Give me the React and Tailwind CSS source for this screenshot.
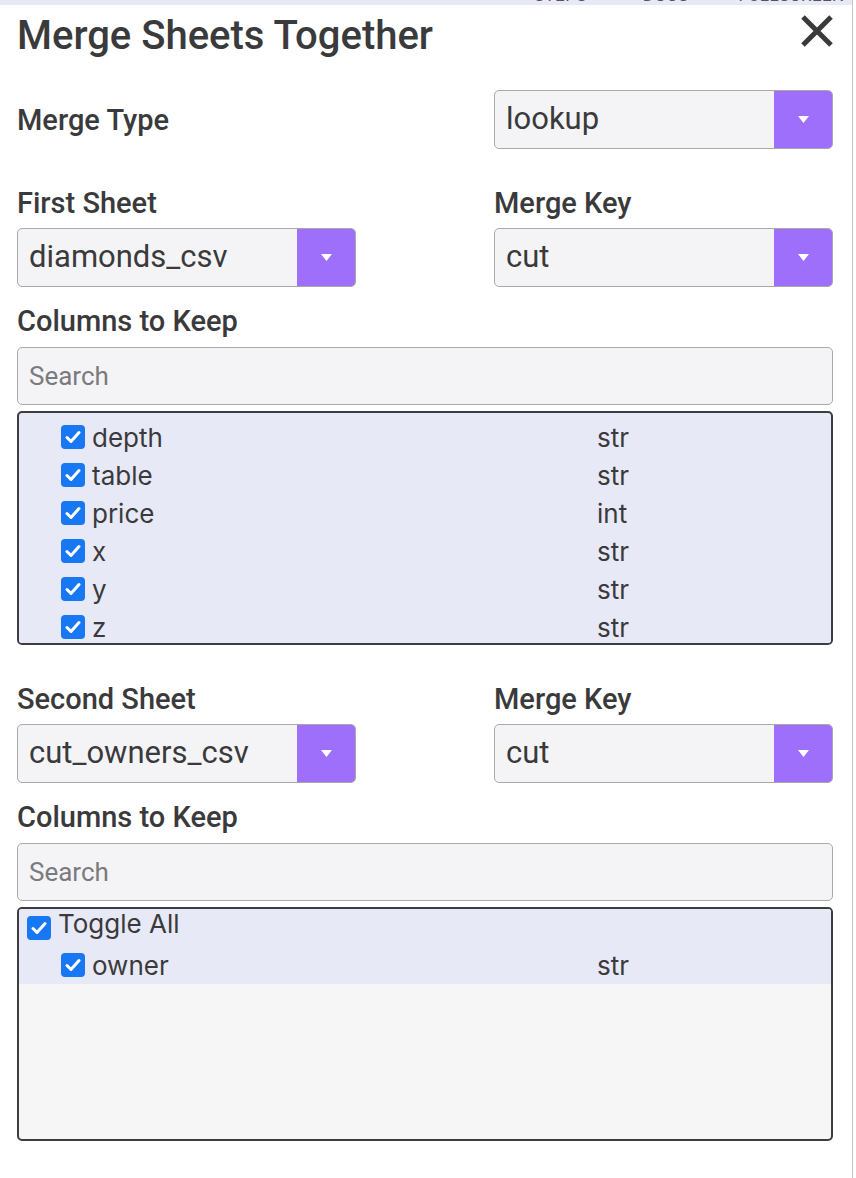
import { useState } from 'react'

const FIRST_COLUMNS = [
  { name: 'depth', type: 'str' },
  { name: 'table', type: 'str' },
  { name: 'price', type: 'int' },
  { name: 'x', type: 'str' },
  { name: 'y', type: 'str' },
  { name: 'z', type: 'str' },
]

const SECOND_COLUMNS = [{ name: 'owner', type: 'str' }]

function Checkbox({ checked, onChange }) {
  return (
    <button
      onClick={onChange}
      className={`w-6 h-6 rounded-[4px] flex items-center justify-center shrink-0 ${
        checked ? 'bg-[#1877f2]' : 'bg-white border-2 border-[#777]'
      }`}
    >
      {checked && (
        <svg width="16" height="14" viewBox="0 0 16 14" fill="none">
          <path d="M2 7.5 L6 11.5 L14 2.5" stroke="white" strokeWidth="3" strokeLinecap="round" strokeLinejoin="round" />
        </svg>
      )}
    </button>
  )
}

function Select({ value, width }) {
  return (
    <div className={`${width} h-[59px] flex rounded-[5px] border border-[#a9a9a9] bg-[#f4f4f6] overflow-hidden`}>
      <div className="flex-1 flex items-center pl-[11px] text-[31px] text-[#3a3a3c] font-['Roboto',sans-serif]">
        {value}
      </div>
      <div className="w-[58px] bg-[#9d6ffb] flex items-center justify-center">
        <svg width="11" height="7" viewBox="0 0 11 7">
          <path d="M0 0 L11 0 L5.5 7 Z" fill="white" />
        </svg>
      </div>
    </div>
  )
}

function Label({ children }) {
  return (
    <div className="h-[34px] leading-[34px] text-[29px] font-medium text-[#3a3a3c] font-['Roboto',sans-serif]">
      {children}
    </div>
  )
}

function SearchBox() {
  return (
    <input
      placeholder="Search"
      className="w-full h-[58px] rounded-[5px] border border-[#a9a9a9] bg-[#f4f4f6] px-[11px] text-[26px] text-[#3a3a3c] placeholder-[#7a7a7e] font-['Roboto',sans-serif] outline-none"
    />
  )
}

function ColumnRow({ col, checked, onToggle }) {
  return (
    <div className="h-[38px] flex items-center pl-[42px] bg-[#e8e9f6]">
      <div className="w-[536px] flex items-center gap-[7px]">
        <Checkbox checked={checked} onChange={onToggle} />
        <span className="text-[26px] text-[#3a3a3c] font-['Inter',sans-serif]">{col.name}</span>
      </div>
      <span className="text-[26px] text-[#3a3a3c] font-['Inter',sans-serif]">{col.type}</span>
    </div>
  )
}

export default function App() {
  const [kept1, setKept1] = useState(FIRST_COLUMNS.map(() => true))
  const [kept2, setKept2] = useState(SECOND_COLUMNS.map(() => true))

  const flip = (arr, setter, i) => setter(arr.map((v, j) => (j === i ? !v : v)))

  return (
    <div className="min-h-screen bg-white">
      <div className="w-[853px] min-h-[1178px] border-r border-[#c4c4c4]">
        {/* Header strip, mostly scrolled out of view */}
        <div className="h-[5px] overflow-hidden bg-[#e8e9f6]">
          <div className="-mt-[14px] flex text-[17px] leading-[18px] tracking-wide text-[#555] font-['Roboto',sans-serif]">
            <span className="ml-[534px]">STEPS</span>
            <span className="ml-[56px]">DOCS</span>
            <span className="ml-[50px]">FULLSCREEN</span>
          </div>
        </div>

        <div className="pl-[17px] pr-[19px]">
          {/* Title */}
          <div className="mt-[8px] h-[46px] flex items-start justify-between">
            <h1 className="text-[40px] leading-[46px] font-medium text-[#3a3a3c] font-['Roboto',sans-serif]">
              Merge Sheets Together
            </h1>
            <svg width="34" height="32" viewBox="0 0 34 32" className="mr-[-1px] mt-[2px]">
              <path d="M3 2 L31 30 M31 2 L3 30" stroke="#3a3a3c" strokeWidth="5" />
            </svg>
          </div>

          {/* Merge type */}
          <div className="mt-[31px] flex items-center justify-between">
            <Label>Merge Type</Label>
            <Select value="lookup" width="w-[339px]" />
          </div>

          {/* First sheet */}
          <div className="mt-[37px] flex justify-between">
            <div className="flex flex-col gap-[8px]">
              <Label>First Sheet</Label>
              <Select value="diamonds_csv" width="w-[339px]" />
            </div>
            <div className="flex flex-col gap-[8px]">
              <Label>Merge Key</Label>
              <Select value="cut" width="w-[339px]" />
            </div>
          </div>

          <div className="mt-[17px]">
            <Label>Columns to Keep</Label>
          </div>
          <div className="mt-[9px]">
            <SearchBox />
          </div>
          <div className="mt-[6px] h-[234px] rounded-[5px] border-2 border-[#3d3d40] bg-[#e8e9f6] overflow-hidden pt-[5px]">
            {FIRST_COLUMNS.map((col, i) => (
              <ColumnRow key={col.name} col={col} checked={kept1[i]} onToggle={() => flip(kept1, setKept1, i)} />
            ))}
          </div>

          {/* Second sheet */}
          <div className="mt-[37px] flex justify-between">
            <div className="flex flex-col gap-[8px]">
              <Label>Second Sheet</Label>
              <Select value="cut_owners_csv" width="w-[339px]" />
            </div>
            <div className="flex flex-col gap-[8px]">
              <Label>Merge Key</Label>
              <Select value="cut" width="w-[339px]" />
            </div>
          </div>

          <div className="mt-[17px]">
            <Label>Columns to Keep</Label>
          </div>
          <div className="mt-[9px]">
            <SearchBox />
          </div>
          <div className="mt-[6px] h-[234px] rounded-[5px] border-2 border-[#3d3d40] bg-[#f6f6f7] overflow-hidden">
            <div className="h-[37px] flex items-center gap-[7px] pl-[8px] bg-[#e8e9f6]">
              <Checkbox
                checked={kept2.every(Boolean)}
                onChange={() => setKept2(kept2.map(() => !kept2.every(Boolean)))}
              />
              <span className="text-[26px] text-[#3a3a3c] font-['Inter',sans-serif] -mt-[8px]">Toggle All</span>
            </div>
            {SECOND_COLUMNS.map((col, i) => (
              <ColumnRow key={col.name} col={col} checked={kept2[i]} onToggle={() => flip(kept2, setKept2, i)} />
            ))}
          </div>
        </div>
      </div>
    </div>
  )
}
